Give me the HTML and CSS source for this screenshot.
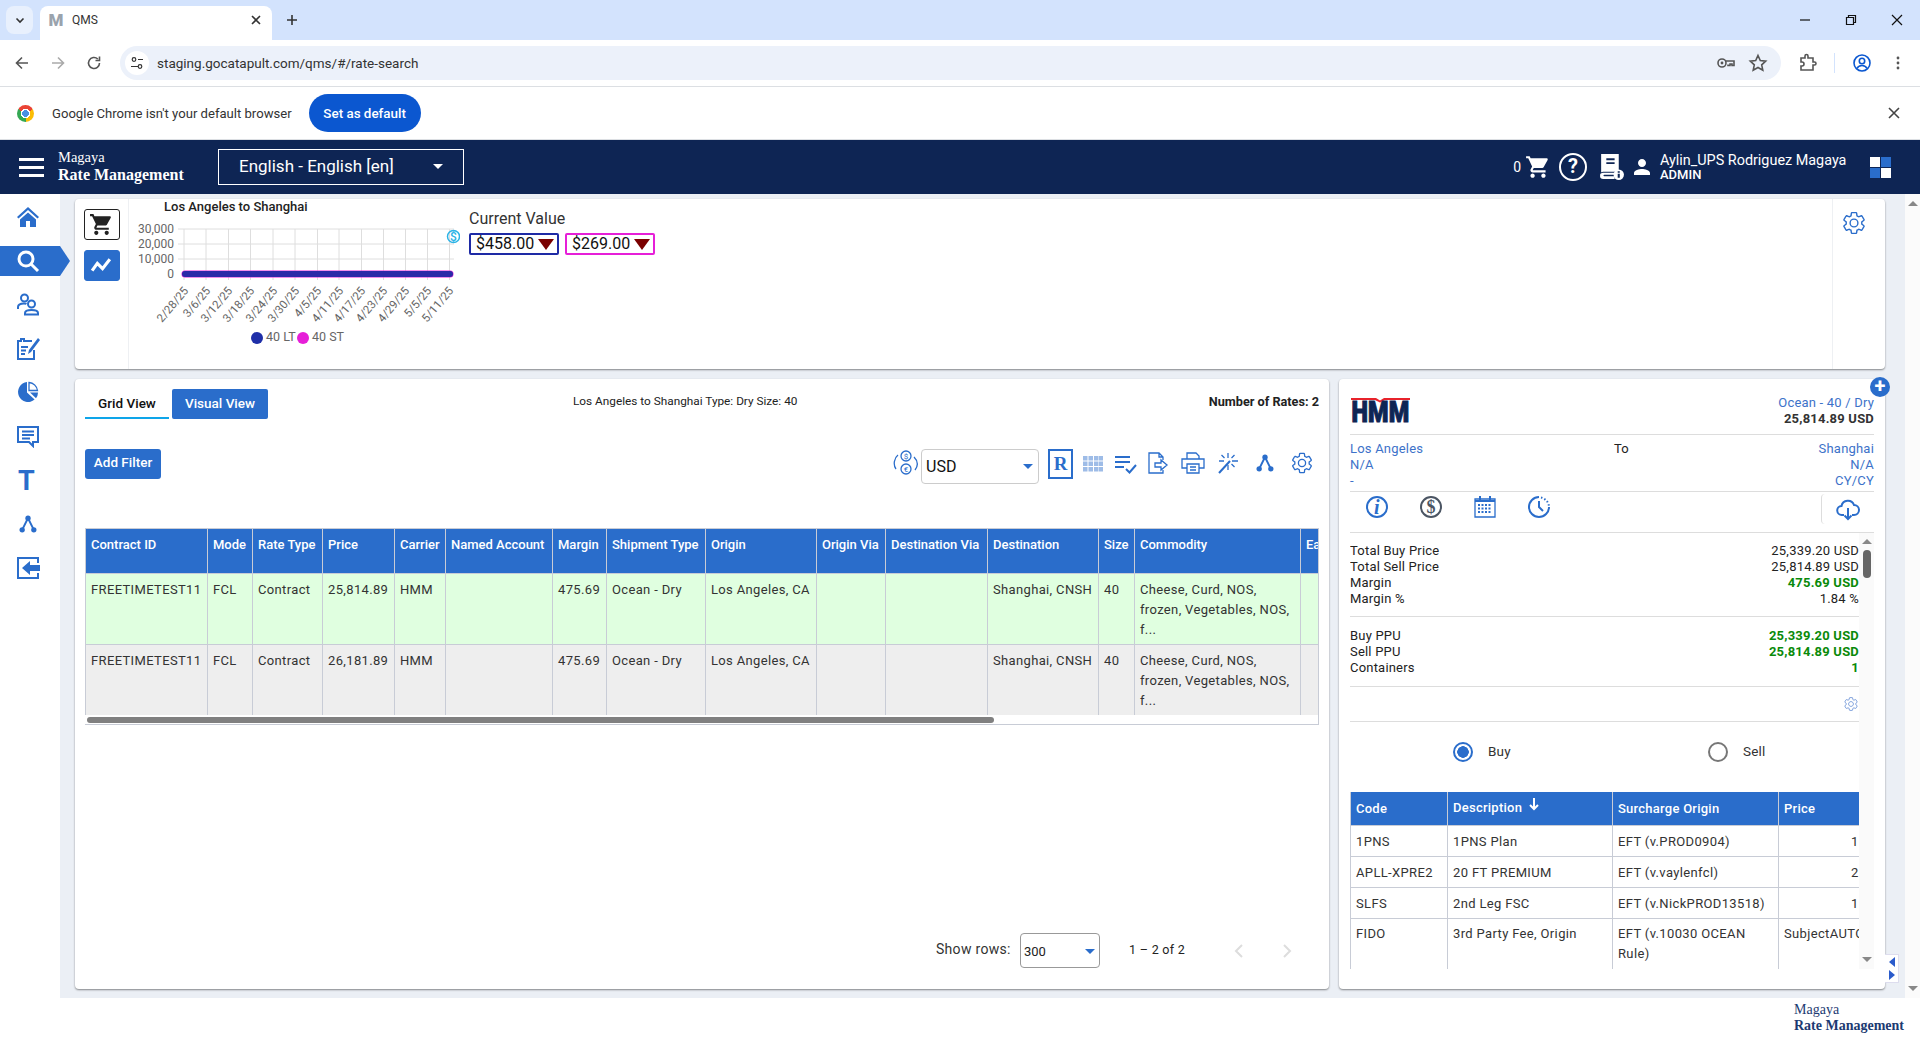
FILE: index.html
```html
<!DOCTYPE html>
<html lang="en">
<head>
    <meta charset="UTF-8">
    <title>QMS</title>
    <link rel="stylesheet" href="styles.css">
</head>
<body>

<svg class="sprite" xmlns="http://www.w3.org/2000/svg">
    <symbol id="i-cart" viewBox="0 0 24 24"><path d="M7 18c-1.1 0-1.99.9-1.99 2S5.9 22 7 22s2-.9 2-2-.9-2-2-2zM1 2v2h2l3.6 7.59-1.35 2.45c-.16.28-.25.61-.25.96 0 1.1.9 2 2 2h12v-2H7.42c-.14 0-.25-.11-.25-.25l.03-.12.9-1.63h7.45c.75 0 1.41-.41 1.75-1.03l3.58-6.49c.08-.14.12-.31.12-.48 0-.55-.45-1-1-1H5.21l-.94-2H1zm16 16c-1.1 0-1.99.9-1.99 2s.89 2 1.99 2 2-.9 2-2-.9-2-2-2z"/></symbol>
    <symbol id="i-person" viewBox="0 0 24 24"><path d="M12 12c2.21 0 4-1.79 4-4s-1.79-4-4-4-4 1.79-4 4 1.79 4 4 4zm0 2c-2.67 0-8 1.34-8 4v2h16v-2c0-2.66-5.33-4-8-4z"/></symbol>
    <symbol id="i-gear" viewBox="0 0 24 24"><path fill="none" stroke="currentColor" stroke-width="1.3" d="M19.14 12.94c.04-.3.06-.61.06-.94 0-.32-.02-.64-.07-.94l2.03-1.58a.49.49 0 0 0 .12-.61l-1.92-3.32a.488.488 0 0 0-.59-.22l-2.39.96c-.5-.38-1.03-.7-1.62-.94l-.36-2.54a.484.484 0 0 0-.48-.41h-3.84c-.24 0-.43.17-.47.41l-.36 2.54c-.59.24-1.13.57-1.62.94l-2.39-.96c-.22-.08-.47 0-.59.22L2.74 8.87c-.12.21-.08.47.12.61l2.03 1.58c-.05.3-.09.63-.09.94s.02.64.07.94l-2.03 1.58a.49.49 0 0 0-.12.61l1.92 3.32c.12.22.37.29.59.22l2.39-.96c.5.38 1.03.7 1.62.94l.36 2.54c.05.24.24.41.48.41h3.84c.24 0 .44-.17.47-.41l.36-2.54c.59-.24 1.13-.56 1.62-.94l2.39.96c.22.08.47 0 .59-.22l1.92-3.32c.12-.22.07-.47-.12-.61l-2.01-1.58zM12 15.6c-1.98 0-3.6-1.62-3.6-3.6s1.62-3.6 3.6-3.6 3.6 1.62 3.6 3.6-1.62 3.6-3.6 3.6z"/></symbol>
    <symbol id="i-share" viewBox="0 0 24 24"><path fill="none" stroke="currentColor" stroke-width="2.4" d="M12 5L5 19M12 5l7 14"/><circle cx="12" cy="5" r="3.2"/><circle cx="5" cy="19" r="3.2"/><circle cx="19" cy="19" r="3.2"/></symbol>
</svg>

<div class="tabstrip">
    <div class="tab-list-btn"><svg class="ic-12" viewBox="0 0 12 12"><path class="line" d="M2.5 4.5L6 8l3.5-3.5"/></svg></div>
    <div class="tab">
        <span class="favicon">M</span>
        <span class="tab-title">QMS</span>
        <svg class="ic-12 tab-close" viewBox="0 0 12 12"><path class="line" d="M2 2l8 8M10 2l-8 8"/></svg>
    </div>
    <svg class="ic-12 new-tab" viewBox="0 0 12 12"><path class="line" d="M6 1v10M1 6h10"/></svg>
    <div class="win-controls">
        <svg class="ic-12" viewBox="0 0 12 12"><path class="thin" d="M1 6h10"/></svg>
        <svg class="ic-12" viewBox="0 0 12 12"><path class="thin" d="M1.5 3.5h7v7h-7zM3.5 3.5v-2h7v7h-2"/></svg>
        <svg class="ic-12" viewBox="0 0 12 12"><path class="thin" d="M1 1l10 10M11 1L1 11"/></svg>
    </div>
</div>

<div class="toolbar">
    <div class="nav-btn"><svg class="ic-16" viewBox="0 0 16 16"><path class="line" d="M14 8H2.5M8 2.5L2.5 8 8 13.5"/></svg></div>
    <div class="nav-btn disabled"><svg class="ic-16" viewBox="0 0 16 16"><path class="line" d="M2 8h11.5M8 2.5L13.5 8 8 13.5"/></svg></div>
    <div class="nav-btn"><svg class="ic-16" viewBox="0 0 16 16"><path class="line" d="M13.5 8A5.5 5.5 0 1 1 11.8 4M13.5 1.5V5.5H9.5"/></svg></div>
    <div class="omnibox">
        <span class="site-icon"><svg class="ic-16" viewBox="0 0 16 16"><circle class="thin" cx="5" cy="4.5" r="1.8"/><circle class="thin" cx="11" cy="11.5" r="1.8"/><path class="thin" d="M9 4.5h5M2 11.5h7"/></svg></span>
        <span class="url">staging.gocatapult.com/qms/#/rate-search</span>
        <svg class="ic-20 omni-key" viewBox="0 0 20 20"><circle class="line" cx="6" cy="10" r="4"/><circle cx="6" cy="10" r="1.4"/><path class="line" d="M10 8h8v4.500h-2V11h-2v1.500h-2v-1"/></svg>
        <svg class="ic-20 omni-star" viewBox="0 0 20 20"><path class="line" d="M10 2.500l2.300 5 5.400.6-4 3.700 1.100 5.400L10 14.500l-4.800 2.700 1.100-5.400-4-3.700 5.400-.6z"/></svg>
    </div>
    <div class="toolbar-right">
        <div class="nav-btn"><svg class="ic-20" viewBox="0 0 20 20"><path class="line" d="M3 5h4V3a1.500 1.500 0 0 1 3 0v2h5v4h1.500a1.500 1.500 0 0 1 0 3H15v5H3v-4h1a2 2 0 0 0 0-4H3z"/></svg></div>
        <span class="toolbar-divider"></span>
        <div class="nav-btn profile"><svg class="ic-20" viewBox="0 0 20 20"><circle class="line" cx="10" cy="10" r="8"/><circle class="line" cx="10" cy="8" r="2.700"/><path class="line" d="M5 15.500c1-2.500 3-3 5-3s4 .5 5 3"/></svg></div>
        <div class="nav-btn"><svg class="ic-16" viewBox="0 0 16 16"><circle cx="8" cy="3" r="1.400"/><circle cx="8" cy="8" r="1.400"/><circle cx="8" cy="13" r="1.400"/></svg></div>
    </div>
</div>

<div class="infobar">
    <span class="chrome-logo"></span>
    <span class="infobar-text">Google Chrome isn't your default browser</span>
    <button class="default-btn">Set as default</button>
    <svg class="ic-12 infobar-close" viewBox="0 0 12 12"><path class="line" d="M1 1l10 10M11 1L1 11"/></svg>
</div>

<header class="app-header">
    <div class="hamburger"><span></span><span></span><span></span></div>
    <div class="brand">
        <div>Magaya</div>
        <div class="brand-bold">Rate Management</div>
    </div>
    <div class="lang-select">
        <span>English - English [en]</span>
        <span class="caret caret-white"></span>
    </div>
    <div class="header-right">
        <span class="cart-count">0</span>
        <svg class="hd-cart" viewBox="0 0 24 24"><use href="#i-cart"/></svg>
        <span class="help-icon">?</span>
        <svg class="hd-book" viewBox="0 0 24 28"><path d="M2 1h17v17H5c-1.500 0-3 .3-3 .8zM7 5v2h8V5zM7 9v1.500h8V9z" fill-rule="evenodd"/><path d="M1 21c0-1.500 2-2 4-2h10v2H5c-1 0-1 1.500 0 1.500h10V25H4c-2 0-3-1-3-2z"/><circle cx="19" cy="21" r="5"/><path class="hd-book-i" d="M18 20h2v4h-2zM18 17.500h2V19h-2z"/></svg>
        <svg class="hd-person" viewBox="0 0 24 24"><use href="#i-person"/></svg>
        <div class="user">
            <div class="user-name">Aylin_UPS Rodriguez Magaya</div>
            <div class="user-role">ADMIN</div>
        </div>
        <div class="app-grid"><span></span><span class="blue"></span><span class="blue"></span><span></span></div>
    </div>
</header>

<div class="app-body">
    <nav class="sidebar">
        <a class="side-item"><svg class="side-ic" viewBox="0 0 24 24"><path d="M12 2L1 12l1.500 1.600L12 5l9.500 8.600L23 12zM4 14.500V22h6v-6h4v6h6v-7.500L12 7.500z"/></svg></a>
        <a class="side-item active"><svg class="side-ic" viewBox="0 0 24 24"><circle class="line-3" cx="10" cy="10" r="7"/><path class="line-3" d="M15 15l7 7"/></svg></a>
        <a class="side-item"><svg class="side-ic" viewBox="0 0 24 24"><circle class="line-2" cx="8.500" cy="6" r="3.500"/><path class="line-2" d="M2 17v-2c0-2.500 3-3.500 6-3.500 1 0 2 .1 2.500.4"/><circle class="line-2" cx="15.500" cy="12" r="3.500"/><path class="line-2" d="M9 22.500V21c0-2 3-3 6.500-3s6.500 1 6.500 3v1.500z"/></svg></a>
        <a class="side-item"><svg class="side-ic" viewBox="0 0 24 24"><path class="line-2" d="M16 5H8V3H5v2H2v18h16V14"/><path class="line-2" d="M5 11h7M5 14.500h5M5 18h4"/><path d="M12 18l1-4L22 2l2 2-9 12z"/></svg></a>
        <a class="side-item"><svg class="side-ic" viewBox="0 0 24 24"><path d="M11 2a10 10 0 1 0 7.600 17.500L11 12.500z"/><path class="line-1" d="M13 2.500v8h8.500A9.500 9.500 0 0 0 13 2.500z"/><path d="M14 12.500h8a10 10 0 0 1-2 5.800z"/></svg></a>
        <a class="side-item"><svg class="side-ic" viewBox="0 0 24 24"><path class="line-2" d="M2 3h20v15h-5v4l-4-4H2z"/><path class="line-2" d="M6 7.500h12M6 11h12M6 14.500h8"/></svg></a>
        <a class="side-item side-t">T</a>
        <a class="side-item"><svg class="side-ic share" viewBox="0 0 24 24"><use href="#i-share"/></svg></a>
        <a class="side-item"><svg class="side-ic" viewBox="0 0 24 24"><path class="line-2" d="M22 7V2H2v20h20v-5"/><path d="M6 12l8-7v4h10v6H14v4z"/></svg></a>
    </nav>

    <main class="main">
        <section class="card top-card">
            <div class="action-col">
                <button class="square-btn"><svg viewBox="0 0 24 24"><use href="#i-cart"/></svg></button>
                <button class="square-btn square-on"><svg viewBox="0 0 24 24"><path class="line-3" d="M3 17l5-7 5 5 7-9"/></svg></button>
            </div>
            <svg class="chart" viewBox="129 199 331 170">
                <text class="chart-title" x="164" y="211">Los Angeles to Shanghai</text>
                <g class="grid-lines">
                    <path d="M178 229H454M178 244H454M178 259H454"/>
                    <path d="M184 229V280M206 229V280M228.500 229V280M250.500 229V280M273 229V280M295 229V280M317.500 229V280M339 229V280M361.500 229V280M383.500 229V280M405.500 229V280M427.500 229V280M449.500 229V280"/>
                </g>
                <g class="y-labels">
                    <text x="174" y="233">30,000</text>
                    <text x="174" y="248">20,000</text>
                    <text x="174" y="263">10,000</text>
                    <text x="174" y="278">0</text>
                </g>
                <rect class="series-st" x="181.500" y="270.500" width="272" height="7" rx="3.500"/>
                <rect class="series-lt" x="182" y="271" width="271" height="6" rx="3"/>
                <g class="x-labels">
                    <text transform="translate(189 291) rotate(-50)">2/28/25</text>
                    <text transform="translate(211 291) rotate(-50)">3/6/25</text>
                    <text transform="translate(233 291) rotate(-50)">3/12/25</text>
                    <text transform="translate(255 291) rotate(-50)">3/18/25</text>
                    <text transform="translate(278 291) rotate(-50)">3/24/25</text>
                    <text transform="translate(300 291) rotate(-50)">3/30/25</text>
                    <text transform="translate(322 291) rotate(-50)">4/5/25</text>
                    <text transform="translate(344 291) rotate(-50)">4/11/25</text>
                    <text transform="translate(366 291) rotate(-50)">4/17/25</text>
                    <text transform="translate(388 291) rotate(-50)">4/23/25</text>
                    <text transform="translate(410 291) rotate(-50)">4/29/25</text>
                    <text transform="translate(432 291) rotate(-50)">5/5/25</text>
                    <text transform="translate(454 291) rotate(-50)">5/11/25</text>
                </g>
                <circle class="dollar-ring" cx="453.500" cy="236.500" r="6"/>
                <text class="dollar-text" x="453.500" y="241">$</text>
                <circle class="dot-lt" cx="257" cy="338" r="6"/>
                <text class="legend" x="266" y="341">40 LT</text>
                <circle class="dot-st" cx="303" cy="338" r="6"/>
                <text class="legend" x="312" y="341">40 ST</text>
            </svg>
            <div class="current">
                <div class="current-title">Current Value</div>
                <div class="current-boxes">
                    <span class="value-box box-lt">$458.00<i class="down"></i></span>
                    <span class="value-box box-st">$269.00<i class="down"></i></span>
                </div>
            </div>
            <div class="top-gear"><svg viewBox="0 0 24 24"><use href="#i-gear"/></svg></div>
        </section>

        <div class="bottom-row">
            <section class="card grid-card">
                <div class="view-bar">
                    <div class="tabs">
                        <span class="view-tab">Grid View</span>
                        <span class="view-tab view-on">Visual View</span>
                    </div>
                    <div class="route-title">Los Angeles to Shanghai Type: Dry Size: 40</div>
                    <div class="rate-count">Number of Rates: 2</div>
                </div>

                <div class="filter-bar">
                    <button class="add-filter">Add Filter</button>
                    <div class="tools">
                        <svg class="exchange" viewBox="0 0 28 28"><circle class="line-1" cx="14" cy="7" r="5"/><circle class="line-1" cx="14" cy="20" r="5"/><text class="exchange-sym" x="14" y="10">$</text><text class="exchange-sym" x="14" y="23">€</text><path class="line-1" d="M6 6C2 9 1 16 4 20M22 8c4 4 4 9 1 13"/></svg>
                        <div class="currency">USD<span class="caret caret-blue"></span></div>
                        <span class="r-btn">R</span>
                        <div class="tool-icons">
                            <svg class="grid-ic" viewBox="0 0 20 16"><path d="M0 0h4.500v4.500H0zM5.500 0H10v4.500H5.500zM11 0h4.500v4.500H11zM16 0h4v4.500h-4zM0 5.500h4.500V10H0zM5.500 5.500H10V10H5.500zM11 5.500h4.500V10H11zM16 5.500h4V10h-4zM0 11h4.500v4.500H0zM5.500 11H10v4.500H5.500zM11 11h4.500v4.500H11zM16 11h4v4.500h-4z"/></svg>
                            <svg viewBox="0 0 24 24"><path class="line-2" d="M2 6h15M2 11h15M2 16h9M13 18l3.500 3.500L23 14"/></svg>
                            <svg viewBox="0 0 24 24"><path class="line-1" d="M17 9V6l-4-4H3v20h14v-3M13 2v4h4"/><path class="line-1" d="M9 12h6V9l6 5-6 5v-3H9z"/></svg>
                            <svg viewBox="0 0 24 24"><path class="line-1" d="M6 8V2h9l3 3v3M6 17H1V8h22v9h-5"/><path class="line-1" d="M6 13h12v9H6zM9 16h6M9 19h6"/></svg>
                            <svg viewBox="0 0 24 24"><path class="line-2" d="M3 22L14 10"/><path class="line-1" d="M12 2v5M12 14v5M3 10h5M16 10h6M5.500 4l3 3M18.500 4l-3 3M18.500 16l-3-3"/></svg>
                            <svg class="tool-share" viewBox="0 0 24 24"><use href="#i-share"/></svg>
                            <svg class="tool-gear" viewBox="0 0 24 24"><use href="#i-gear"/></svg>
                        </div>
                    </div>
                </div>

                <div class="rates-wrap">
                    <div class="rates-scroll">
                        <table class="rates">
                            <colgroup>
                                <col class="c1"><col class="c2"><col class="c3"><col class="c4"><col class="c5"><col class="c6"><col class="c7"><col class="c8"><col class="c9"><col class="c10"><col class="c11"><col class="c12"><col class="c13"><col class="c14"><col class="c15">
                            </colgroup>
                            <thead>
                                <tr><th>Contract ID</th><th>Mode</th><th>Rate Type</th><th>Price</th><th>Carrier</th><th>Named Account</th><th>Margin</th><th>Shipment Type</th><th>Origin</th><th>Origin Via</th><th>Destination Via</th><th>Destination</th><th>Size</th><th>Commodity</th><th>Ea</th></tr>
                            </thead>
                            <tbody>
                                <tr class="row-best"><td>FREETIMETEST11</td><td>FCL</td><td>Contract</td><td>25,814.89</td><td>HMM</td><td></td><td>475.69</td><td>Ocean - Dry</td><td>Los Angeles, CA</td><td></td><td></td><td>Shanghai, CNSH</td><td>40</td><td>Cheese, Curd, NOS, frozen, Vegetables, NOS, f...</td><td></td></tr>
                                <tr class="row-alt"><td>FREETIMETEST11</td><td>FCL</td><td>Contract</td><td>26,181.89</td><td>HMM</td><td></td><td>475.69</td><td>Ocean - Dry</td><td>Los Angeles, CA</td><td></td><td></td><td>Shanghai, CNSH</td><td>40</td><td>Cheese, Curd, NOS, frozen, Vegetables, NOS, f...</td><td></td></tr>
                            </tbody>
                        </table>
                    </div>
                    <div class="hbar"><span class="hbar-thumb"></span></div>
                </div>

                <div class="pager">
                    <span class="pager-label">Show rows:</span>
                    <div class="rows-select">300<span class="caret caret-blue"></span></div>
                    <span class="pager-range">1 – 2 of 2</span>
                    <svg class="pager-arrow" viewBox="0 0 12 16"><path class="line-2" d="M9 2L3 8l6 6"/></svg>
                    <svg class="pager-arrow" viewBox="0 0 12 16"><path class="line-2" d="M3 2l6 6-6 6"/></svg>
                </div>
            </section>

            <section class="card rate-card">
                <span class="add-btn">+</span>
                <div class="rate-head">
                    <svg class="hmm-logo" viewBox="0 0 59 25">
                        <path class="hmm-red" d="M0 0h25l4 2.500L33 0h26v2H34l-5 2.500L24 2H0z"/>
                        <text class="hmm-text" transform="scale(1 1.3)" x="0.5" y="18.800" textLength="58" lengthAdjust="spacingAndGlyphs">HMM</text>
                    </svg>
                    <div class="rate-head-right">
                        <div class="link-text">Ocean - 40 / Dry</div>
                        <div class="head-price">25,814.89 USD</div>
                    </div>
                </div>
                <div class="route">
                    <div class="link-text">Los Angeles<br>N/A<br>-</div>
                    <div>To</div>
                    <div class="link-text route-end">Shanghai<br>N/A<br>CY/CY</div>
                </div>
                <div class="rate-actions">
                    <span class="action-ic"><svg viewBox="0 0 24 24"><circle class="line-2" cx="12" cy="12" r="10"/></svg><b class="ic-letter ic-info">i</b></span>
                    <span class="action-ic dollar"><svg viewBox="0 0 24 24"><circle class="line-2" cx="12" cy="12" r="10"/></svg><b class="ic-letter">$</b></span>
                    <span class="action-ic"><svg viewBox="0 0 24 24"><path class="line-1" d="M2 4h20v18H2z"/><path class="line-2" d="M2 6h20M7 1v4M17 1v4"/><path class="dots" d="M5 10h14M5 13.500h14M5 17h14"/></svg></span>
                    <span class="action-ic"><svg viewBox="0 0 24 24"><path class="line-2" d="M12 2a10 10 0 1 0 10 10"/><path class="dots-round" d="M14 2.500a10 10 0 0 1 8 9.500"/><path class="line-2" d="M12 6v6l4 4"/></svg></span>
                    <span class="download"><svg viewBox="0 0 24 24"><path class="line-2" d="M8 18H6a4.500 4.500 0 0 1-.5-9A6.500 6.500 0 0 1 18 8a5 5 0 0 1 0 10h-2"/><path class="line-2" d="M12 11v11M8.500 18.500L12 22l3.500-3.500"/></svg></span>
                </div>

                <div class="rate-scroll">
                    <div class="rate-body">
                        <div class="kv-group kv-prices">
                            <div class="kv"><span>Total Buy Price</span><span>25,339.20 USD</span></div>
                            <div class="kv"><span>Total Sell Price</span><span>25,814.89 USD</span></div>
                            <div class="kv"><span>Margin</span><b class="green">475.69 USD</b></div>
                            <div class="kv"><span>Margin %</span><span>1.84 %</span></div>
                        </div>
                        <div class="kv-group kv-ppu">
                            <div class="kv"><span>Buy PPU</span><b class="green">25,339.20 USD</b></div>
                            <div class="kv"><span>Sell PPU</span><b class="green">25,814.89 USD</b></div>
                            <div class="kv"><span>Containers</span><b class="green">1</b></div>
                        </div>
                        <div class="gear-row"><svg viewBox="0 0 24 24"><use href="#i-gear"/></svg></div>
                        <div class="radios">
                            <label class="radio-item"><span class="radio radio-on"></span><span class="radio-text">Buy</span></label>
                            <label class="radio-item"><span class="radio"></span><span class="radio-text">Sell</span></label>
                        </div>
                        <div class="charges-wrap">
                            <table class="charges">
                                <colgroup><col class="cc1"><col class="cc2"><col class="cc3"><col class="cc4"></colgroup>
                                <thead>
                                    <tr><th>Code</th><th>Description <svg class="sort-arrow" viewBox="0 0 12 14"><path class="line-2" d="M6 1v11M2 8l4 4 4-4"/></svg></th><th>Surcharge Origin</th><th>Price</th></tr>
                                </thead>
                                <tbody>
                                    <tr><td>1PNS</td><td>1PNS Plan</td><td>EFT (v.PROD0904)</td><td class="num">1</td></tr>
                                    <tr><td>APLL-XPRE2</td><td>20 FT PREMIUM</td><td>EFT (v.vaylenfcl)</td><td class="num">2</td></tr>
                                    <tr><td>SLFS</td><td>2nd Leg FSC</td><td>EFT (v.NickPROD13518)</td><td class="num">1</td></tr>
                                    <tr class="row-last"><td>FIDO</td><td>3rd Party Fee, Origin</td><td>EFT (v.10030 OCEAN Rule)</td><td class="nowrap">SubjectAUTO</td></tr>
                                </tbody>
                            </table>
                        </div>
                    </div>
                    <div class="vbar">
                        <span class="arrow-up"></span>
                        <span class="vbar-thumb"></span>
                        <span class="arrow-down"></span>
                    </div>
                </div>
                <div class="collapse-tab"><i class="tri-left"></i><i class="tri-right"></i></div>
            </section>
        </div>
    </main>

    <div class="page-scroll">
        <span class="arrow-up"></span>
        <span class="arrow-down"></span>
    </div>
</div>

<footer class="app-footer">
    <div class="footer-brand">
        <div>Magaya</div>
        <div class="brand-bold">Rate Management</div>
    </div>
</footer>

</body>
</html>
```

FILE: styles.css
```css
* {
    box-sizing: border-box;
}

html, body {
    margin: 0;
    padding: 0;
    height: 1040px;
    overflow: hidden;
}

body {
    font-family: Roboto, "Liberation Sans", sans-serif;
    font-size: 13px;
    color: #222;
    background-color: white;
    display: flex;
    flex-direction: column;
}

.sprite {
    position: absolute;
    width: 0;
    height: 0;
}

svg {
    fill: currentColor;
    display: block;
}

.line, .thin, .line-1, .line-2, .line-3 {
    fill: none;
    stroke: currentColor;
}

.line { stroke-width: 1.6; }
.thin { stroke-width: 1.2; }
.line-1 { stroke-width: 1.3; }
.line-2 { stroke-width: 2; }
.line-3 { stroke-width: 3; }

.ic-12 { width: 12px; height: 12px; }
.ic-16 { width: 16px; height: 16px; }
.ic-20 { width: 20px; height: 20px; }

/* browser chrome */
.tabstrip {
    height: 40px;
    flex: none;
    background-color: #d3e3fd;
    display: flex;
    align-items: flex-end;
    position: relative;
    color: #333;
}

.tab-list-btn {
    width: 27px;
    height: 28px;
    margin: 0 7px 6px 6px;
    background-color: #e8f0fd;
    border-radius: 8px;
    display: flex;
    align-items: center;
    justify-content: center;
}

.tab {
    width: 232px;
    height: 34px;
    background-color: white;
    border-radius: 8px 8px 0 0;
    display: flex;
    align-items: center;
    padding: 0 10px 6px 8px;
}

.favicon {
    width: 16px;
    font-weight: 900;
    font-size: 17px;
    color: #9aa3ad;
    text-align: center;
}

.tab-title {
    margin-left: 8px;
    font-size: 12px;
    flex: 1;
}

.new-tab {
    margin: 0 0 14px 14px;
}

.win-controls {
    margin-left: auto;
    display: flex;
    gap: 34px;
    padding: 0 17px 14px 0;
    color: #111;
}

.toolbar {
    height: 47px;
    flex: none;
    background-color: white;
    border-bottom: 1px solid #dcdfe3;
    display: flex;
    align-items: center;
    padding: 0 4px;
    color: #555;
    position: relative;
}

.nav-btn {
    width: 36px;
    height: 32px;
    display: flex;
    align-items: center;
    justify-content: center;
}

.nav-btn.disabled {
    color: #aaa;
}

.omnibox {
    flex: 1;
    height: 34px;
    margin: -1px 0 0 8px;
    background-color: #ecf1fa;
    border-radius: 17px;
    display: flex;
    align-items: center;
    padding: 0 13px 0 5px;
}

.site-icon {
    width: 24px;
    height: 24px;
    border-radius: 50%;
    background-color: white;
    color: #333;
    display: flex;
    align-items: center;
    justify-content: center;
}

.url {
    margin-left: 8px;
    font-size: 13.5px;
    color: #333;
}

.omni-key {
    margin-left: auto;
}

.omni-star {
    margin-left: 12px;
}

.toolbar-right {
    display: flex;
    align-items: center;
    margin-left: 9px;
}

.toolbar-divider {
    width: 1px;
    height: 20px;
    margin: 0 9px 0 8px;
    background-color: #d3e3fd;
}

.profile {
    color: #0b57d0;
}

.infobar {
    height: 53px;
    flex: none;
    background-color: white;
    border-bottom: 1px solid #dcdfe3;
    display: flex;
    align-items: center;
    padding-left: 17px;
}

.chrome-logo {
    width: 17px;
    height: 17px;
    border-radius: 50%;
    background: radial-gradient(circle, #4a90e2 0 3.5px, white 3.6px 4.8px, transparent 4.9px),
        conic-gradient(from -60deg, #ea4335 0 120deg, #fbbc04 120deg 240deg, #34a853 240deg 360deg);
}

.infobar-text {
    margin-left: 18px;
    font-size: 13.1px;
    color: #333;
}

.default-btn {
    margin-left: 17px;
    width: 112px;
    height: 38px;
    border: none;
    border-radius: 19px;
    background-color: #0b57d0;
    color: white;
    font-family: Roboto, sans-serif;
    font-size: 13.4px;
    font-weight: 500;
}

.infobar-close {
    margin-left: auto;
    margin-right: 20px;
    color: #444;
}

/* app header */
.app-header {
    height: 54px;
    flex: none;
    background-color: #0e2554;
    color: white;
    display: flex;
    align-items: center;
    padding: 0 29px 0 19px;
}

.hamburger {
    width: 25px;
    display: flex;
    flex-direction: column;
    gap: 5px;
}

.hamburger span {
    height: 3px;
    background-color: white;
}

.brand {
    margin: -2px 0 0 14px;
    width: 126px;
    font-family: "Liberation Serif", serif;
    font-size: 14.5px;
    line-height: 18px;
    white-space: nowrap;
}

.brand .brand-bold {
    font-weight: bold;
    font-size: 16px;
}

.lang-select {
    margin-left: 34px;
    width: 246px;
    height: 36px;
    border: 1px solid white;
    display: flex;
    align-items: center;
    justify-content: space-between;
    padding: 0 20px 2px;
    font-size: 17px;
}

.caret {
    width: 0;
    height: 0;
    border-left: 5px solid transparent;
    border-right: 5px solid transparent;
    border-top: 5px solid white;
}

.caret-blue {
    border-top-color: #2a6dcb;
}

.header-right {
    margin-left: auto;
    display: flex;
    align-items: center;
}

.cart-count {
    font-size: 14px;
}

.hd-cart {
    width: 26px;
    height: 26px;
    margin-left: 4px;
}

.help-icon {
    width: 28px;
    height: 28px;
    margin-left: 8px;
    border: 2.5px solid white;
    border-radius: 50%;
    font-size: 20px;
    font-weight: 700;
    text-align: center;
    line-height: 23px;
}

.hd-book {
    width: 25px;
    height: 29px;
    margin-left: 12px;
}

.hd-book-i {
    fill: #0e2554;
}

.hd-person {
    width: 24px;
    height: 24px;
    margin-left: 6px;
}

.user {
    margin-left: 6px;
    width: 210px;
}

.user-name {
    font-size: 14.4px;
    line-height: 15px;
}

.user-role {
    font-size: 13px;
    line-height: 13px;
    font-weight: 500;
}

.app-grid {
    width: 21px;
    height: 21px;
    display: grid;
    grid-template-columns: 1fr 1fr;
    gap: 1px;
}

.app-grid span {
    background-color: white;
}

.app-grid .blue {
    background-color: #2a6dcb;
}

/* page body */
.app-body {
    height: 804px;
    flex: none;
    display: flex;
    background-color: #ebeff5;
}

.sidebar {
    width: 60px;
    flex: none;
    background-color: white;
    padding-top: 2px;
    position: relative;
    z-index: 2;
}

.side-item {
    height: 44px;
    display: flex;
    align-items: center;
    padding-left: 16px;
    color: #2a6dcb;
    position: relative;
}

.side-item:first-child {
    height: 43px;
}

.side-item.active {
    color: white;
}

.side-item.active::before {
    content: "";
    position: absolute;
    left: 0;
    top: 7px;
    width: 70px;
    height: 30px;
    background-color: #2a6dcb;
    clip-path: polygon(0 0, 60px 0, 100% 50%, 60px 100%, 0 100%);
}

.side-ic {
    width: 24px;
    height: 24px;
    margin-top: -2px;
    position: relative;
}

.active .side-ic {
    margin-top: 0;
}

.side-ic.share {
    width: 20px;
    height: 20px;
    margin-left: 2px;
}

.side-t {
    font-size: 27px;
    font-weight: 700;
    padding-left: 18px;
}

.main {
    flex: 1;
    padding: 5px 20px 0 15px;
    display: flex;
    flex-direction: column;
    gap: 10px;
}

.card {
    background-color: white;
    border-radius: 4px;
    box-shadow: 0 1px 2px rgba(0, 0, 0, 0.45);
}

.top-card {
    height: 170px;
    flex: none;
    display: flex;
}

.action-col {
    width: 54px;
    border-right: 1px solid #eef0f3;
    display: flex;
    flex-direction: column;
    align-items: center;
    gap: 10px;
    padding-top: 10px;
}

.square-btn {
    width: 36px;
    height: 31px;
    padding: 0;
    border: 1px solid #222;
    border-radius: 3px;
    background-color: white;
    color: #222;
    display: flex;
    align-items: center;
    justify-content: center;
}

.square-btn svg {
    width: 25px;
    height: 25px;
}

.square-on {
    border-color: #2a6dcb;
    background-color: #2a6dcb;
    color: white;
}

.chart {
    width: 331px;
    height: 170px;
    flex: none;
}

.chart text {
    font-family: Roboto, sans-serif;
}

.chart-title {
    font-size: 13px;
    font-weight: 500;
    fill: #222;
}

.grid-lines path {
    fill: none;
    stroke: #dedede;
    stroke-width: 1;
}

.y-labels text {
    font-size: 12px;
    fill: #666;
    text-anchor: end;
}

.x-labels text {
    font-size: 11.5px;
    fill: #666;
    text-anchor: end;
}

.series-st { fill: #e61fd8; }
.series-lt { fill: #2a2aa8; }

.dollar-ring {
    fill: none;
    stroke: #2bb3e6;
    stroke-width: 1.5;
}

.dollar-text {
    font-size: 12px;
    font-weight: 500;
    text-anchor: middle;
    fill: #2bb3e6;
}

.dot-lt { fill: #1f2fa8; }
.dot-st { fill: #e61fd8; }

.legend {
    font-size: 12.5px;
    fill: #666;
}

.current {
    margin-left: 9px;
    padding-top: 10px;
}

.current-title {
    font-size: 16px;
    line-height: 19px;
    color: #333;
}

.current-boxes {
    margin-top: 5px;
    display: flex;
    gap: 6px;
}

.value-box {
    height: 22px;
    width: 90px;
    border: 2px solid;
    border-radius: 2px;
    font-size: 16px;
    line-height: 18px;
    padding-left: 5px;
    color: #111;
    display: flex;
    align-items: center;
    white-space: nowrap;
}

.box-lt { border-color: #1e2aa5; }
.box-st { border-color: #e61fd8; }

.down {
    width: 0;
    height: 0;
    margin-left: 4px;
    border-left: 8px solid transparent;
    border-right: 8px solid transparent;
    border-top: 11px solid #7a0000;
}

.top-gear {
    margin-left: auto;
    width: 53px;
    border-left: 1px solid #eef0f3;
    padding: 11px 0 0 8px;
    color: #2a6dcb;
}

.top-gear svg {
    width: 26px;
    height: 26px;
}

.bottom-row {
    height: 610px;
    flex: none;
    display: grid;
    grid-template-columns: 1254px 546px;
    gap: 10px;
}

/* grid card */
.grid-card {
    padding: 10px 10px 21px;
    display: flex;
    flex-direction: column;
}

.view-bar {
    display: grid;
    grid-template-columns: 488px 1fr auto;
    align-items: center;
    font-size: 12px;
}

.tabs {
    display: flex;
    gap: 3px;
}

.view-tab {
    height: 30px;
    width: 84px;
    display: flex;
    align-items: center;
    justify-content: center;
    padding-bottom: 1px;
    font-size: 13.5px;
    font-weight: 500;
    color: #111;
    border-bottom: 2px solid #0ea5e9;
}

.view-tab.view-on {
    width: 96px;
    padding-bottom: 2px;
    background-color: #2a6dcb;
    color: white;
    border: none;
    border-radius: 2px;
}

.route-title {
    margin-top: -6px;
    font-size: 11.8px;
    color: #222;
}

.rate-count {
    margin-top: -6px;
    font-size: 12.7px;
    font-weight: 700;
    color: #222;
}

.filter-bar {
    margin-top: 30px;
    display: flex;
    justify-content: space-between;
    align-items: flex-start;
}

.add-filter {
    width: 76px;
    height: 30px;
    padding: 0 0 4px;
    border: none;
    border-radius: 3px;
    background-color: #2a6dcb;
    color: white;
    font-family: Roboto, sans-serif;
    font-size: 13.5px;
    font-weight: 500;
}

.tools {
    display: flex;
    align-items: flex-start;
    color: #2a6dcb;
}

.exchange {
    width: 28px;
    height: 28px;
}

.exchange-sym {
    font-family: Roboto, sans-serif;
    font-size: 8px;
    text-anchor: middle;
}

.currency {
    width: 118px;
    height: 35px;
    margin-left: 1px;
    border: 1px solid #ccc;
    border-radius: 4px;
    display: flex;
    align-items: center;
    justify-content: space-between;
    padding: 0 5px 0 4px;
    font-size: 16px;
    color: #111;
}

.r-btn {
    width: 25px;
    height: 30px;
    margin-left: 9px;
    border: 2px solid #2a6dcb;
    font-family: "Liberation Serif", serif;
    font-weight: bold;
    font-size: 19px;
    line-height: 26px;
    text-align: center;
}

.tool-icons {
    display: grid;
    grid-template-columns: 32px 32px 34px 36px 34px 40px 34px;
    margin-left: 4px;
    justify-items: center;
    padding-top: 2px;
}

.tool-icons svg {
    width: 24px;
    height: 24px;
}

.tool-icons .grid-ic {
    width: 20px;
    height: 16px;
    margin-top: 5px;
    opacity: 0.45;
}

.tool-icons .tool-share {
    width: 20px;
    height: 20px;
    margin-top: 2px;
}

.rates-wrap {
    margin-top: 44px;
    border-top: 1px solid #c8ccd6;
    border-right: 1px solid #c8ccd6;
    border-bottom: 1px solid #c8ccd6;
    height: 197px;
    flex: none;
}

.rates-scroll {
    height: 186px;
    overflow: hidden;
}

.rates {
    table-layout: fixed;
    border-collapse: collapse;
    width: 1289px;
}

.c1 { width: 122px; }
.c2 { width: 45px; }
.c3 { width: 70px; }
.c4 { width: 72px; }
.c5 { width: 51px; }
.c6 { width: 107px; }
.c7 { width: 54px; }
.c8 { width: 99px; }
.c9 { width: 111px; }
.c10 { width: 69px; }
.c11 { width: 102px; }
.c12 { width: 111px; }
.c13 { width: 36px; }
.c14 { width: 166px; }
.c15 { width: 74px; }

.rates th, .charges th {
    background-color: #2a6dcb;
    color: white;
    font-weight: 500;
    text-align: left;
    white-space: nowrap;
    overflow: hidden;
}

.rates th {
    height: 44px;
    padding: 6px 4px 0 5px;
    font-size: 13px;
    line-height: 20px;
    vertical-align: top;
    border-left: 1px solid #c8ccd6;
}

.rates td {
    height: 71px;
    padding: 6px 4px 0 5px;
    line-height: 20px;
    letter-spacing: 0.35px;
    vertical-align: top;
    color: #333;
    border-left: 1px solid #c8ccd6;
    border-top: 1px solid #c8ccd6;
    font-size: 13px;
}

.rates td:nth-child(1),
.rates td:nth-child(9),
.rates td:nth-child(12) {
    white-space: nowrap;
}

.row-best td { background-color: #e0ffe0; }
.row-alt td { background-color: #eee; }

.hbar {
    height: 10px;
    padding: 2px 0 2px 2px;
}

.hbar-thumb {
    display: block;
    width: 907px;
    height: 6px;
    border-radius: 3px;
    background-color: #808080;
}

.pager {
    margin-top: auto;
    height: 35px;
    display: flex;
    align-items: center;
    padding-left: 851px;
}

.pager > * {
    flex: none;
}

.pager-label {
    padding-bottom: 4px;
    font-size: 14px;
    letter-spacing: 0.3px;
    color: #333;
    width: 84px;
}

.rows-select {
    width: 80px;
    height: 35px;
    border: 1px solid #999;
    border-radius: 4px;
    display: flex;
    align-items: center;
    justify-content: space-between;
    padding: 1px 4px 0 3px;
    font-size: 13px;
}

.pager-range {
    margin-left: 29px;
    padding-bottom: 3px;
    width: 104px;
    font-size: 12.5px;
    letter-spacing: 0.3px;
}

.pager-arrow {
    width: 12px;
    height: 16px;
    color: #ddd;
}

.pager-arrow + .pager-arrow {
    margin-left: 36px;
}

/* rate detail card */
.rate-card {
    position: relative;
    padding: 0 11px;
    display: flex;
    flex-direction: column;
    letter-spacing: 0.2px;
}

.add-btn {
    position: absolute;
    top: -2px;
    right: -5px;
    width: 20px;
    height: 20px;
    border-radius: 50%;
    background-color: #2a6dcb;
    color: white;
    font-size: 20px;
    font-weight: 700;
    line-height: 19px;
    text-align: center;
}

.rate-head {
    height: 56px;
    flex: none;
    display: flex;
    justify-content: space-between;
    border-bottom: 1px solid #ddd;
    padding-top: 16px;
}

.hmm-logo {
    width: 59px;
    height: 25px;
    margin: 3px 0 0 1px;
    overflow: visible;
}

.hmm-red { fill: #e8232b; }

.hmm-text {
    font-family: Roboto, sans-serif;
    font-size: 22px;
    font-weight: 900;
    fill: #0e2554;
    stroke: #0e2554;
    stroke-width: 0.8;
}

.rate-head-right {
    text-align: right;
    line-height: 16px;
}

.link-text {
    color: #3d72c9;
}

.head-price {
    font-weight: 700;
    color: #333;
}

.route {
    height: 57px;
    flex: none;
    display: grid;
    grid-template-columns: 264px 1fr 1fr;
    padding-top: 6px;
    line-height: 16px;
    border-bottom: 1px solid #ddd;
}

.route-end {
    text-align: right;
}

.rate-actions {
    height: 41px;
    flex: none;
    display: flex;
    align-items: flex-start;
    padding-top: 2px;
    border-bottom: 1px solid #ddd;
    color: #2a6dcb;
}

.action-ic {
    width: 54px;
    height: 24px;
    margin-top: 1px;
    display: flex;
    justify-content: center;
    position: relative;
}

.action-ic svg, .download svg {
    width: 24px;
    height: 24px;
}

.dollar {
    color: #4b5563;
}

.ic-letter {
    position: absolute;
    left: 0;
    right: 0;
    top: 0;
    font-family: "Liberation Serif", serif;
    font-size: 18px;
    line-height: 24px;
    text-align: center;
}

.ic-info {
    font-style: italic;
    font-size: 20px;
}

.dots {
    fill: none;
    stroke: currentColor;
    stroke-width: 2;
    stroke-dasharray: 2 1.5;
}

.dots-round {
    fill: none;
    stroke: currentColor;
    stroke-width: 2;
    stroke-dasharray: 1.5 2;
}

.download {
    margin-left: auto;
    width: 53px;
    height: 30px;
    border-left: 1px solid #ddd;
    border-radius: 4px;
    display: flex;
    align-items: center;
    justify-content: center;
}

.rate-scroll {
    height: 436px;
    flex: none;
    display: flex;
}

.rate-body {
    flex: 1;
    min-width: 0;
    overflow: hidden;
}

.kv-group {
    border-bottom: 1px solid #ddd;
    line-height: 16px;
}

.kv-prices { padding: 10px 0 9px; }
.kv-ppu { padding: 11px 0 10px; }

.kv {
    display: flex;
    justify-content: space-between;
}

.green {
    color: #0a8a0a;
    font-weight: 700;
}

.gear-row {
    height: 35px;
    border-bottom: 1px solid #ddd;
    display: flex;
    justify-content: flex-end;
    align-items: center;
    color: #6f96d8;
}

.gear-row svg {
    width: 16px;
    height: 16px;
}

.radios {
    height: 70px;
    display: flex;
    padding: 20px 0 0 103px;
}

.radio-item {
    flex: none;
    width: 255px;
    height: 20px;
    display: flex;
    align-items: center;
    gap: 15px;
    font-size: 13.5px;
    color: #333;
}

.radio-item:last-child {
    width: auto;
}

.radio-text {
    margin-top: -2px;
}

.radio {
    width: 20px;
    height: 20px;
    border: 2px solid #777;
    border-radius: 50%;
}

.radio-on {
    border-color: #2a6dcb;
    background: radial-gradient(circle, #2a6dcb 0 5.5px, white 6px);
}

.charges-wrap {
    overflow: hidden;
}

.charges {
    table-layout: fixed;
    border-collapse: collapse;
    width: 546px;
}

.cc1 { width: 97px; }
.cc2 { width: 165px; }
.cc3 { width: 166px; }
.cc4 { width: 118px; }

.charges th {
    height: 33px;
    padding: 0 5px;
    letter-spacing: 0.25px;
    border-left: 1px solid #c8ccd6;
}

.sort-arrow {
    display: inline-block;
    width: 12px;
    height: 14px;
    margin: 0 0 9px 2px;
    vertical-align: middle;
}

.charges td {
    padding: 6px 5px 4px;
    line-height: 20px;
    letter-spacing: 0.35px;
    vertical-align: top;
    color: #333;
    border-left: 1px solid #c8ccd6;
    border-top: 1px solid #c8ccd6;
    border-bottom: 1px solid #c8ccd6;
}

.charges .row-last td {
    padding: 5px 5px 20px;
}

.charges td.num {
    padding-left: 72px;
}

.charges td.nowrap {
    white-space: nowrap;
}

.vbar {
    width: 15px;
    flex: none;
    background-color: #fafafa;
    position: relative;
    display: flex;
    flex-direction: column;
    align-items: center;
    padding: 6px 0;
}

.arrow-up, .arrow-down {
    width: 0;
    height: 0;
    border-left: 5px solid transparent;
    border-right: 5px solid transparent;
}

.arrow-up { border-bottom: 5px solid #888; }
.arrow-down { border-top: 5px solid #888; margin-top: auto; }

.vbar-thumb {
    width: 8px;
    height: 28px;
    margin-top: 6px;
    border-radius: 4px;
    background-color: #666;
}

.vbar .arrow-down {
    margin-bottom: 1px;
}

.collapse-tab {
    position: absolute;
    right: -14px;
    top: 575px;
    width: 14px;
    height: 29px;
    background-color: white;
    border: 1px solid #dde;
    border-left: none;
    display: flex;
    flex-direction: column;
    align-items: center;
    justify-content: center;
    gap: 3px;
}

.tri-left, .tri-right {
    width: 0;
    height: 0;
    border-top: 5px solid transparent;
    border-bottom: 5px solid transparent;
}

.tri-left { border-right: 6px solid #2a5bcb; }
.tri-right { border-left: 6px solid #2a5bcb; }

.page-scroll {
    width: 15px;
    flex: none;
    background-color: #fbfbfb;
    display: flex;
    flex-direction: column;
    align-items: center;
    padding: 7px 0;
}

/* footer */
.app-footer {
    flex: 1;
    display: flex;
    justify-content: flex-end;
    padding: 4px 16px 0 0;
}

.footer-brand {
    width: 110px;
    font-family: "Liberation Serif", serif;
    font-size: 14px;
    line-height: 16px;
    color: #1c3a72;
    white-space: nowrap;
}

.footer-brand .brand-bold {
    font-weight: bold;
    font-size: 14px;
}
```
